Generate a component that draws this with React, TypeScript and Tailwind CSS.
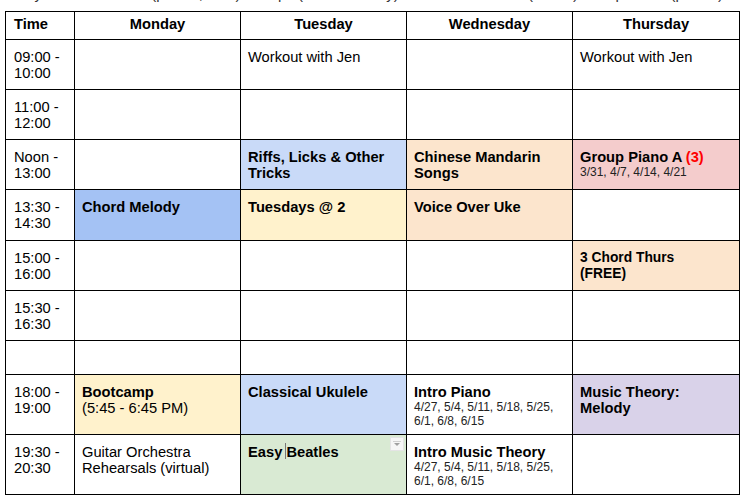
import React from 'react';

type Cell = {
  title?: React.ReactNode;
  text?: React.ReactNode;
  dates?: string[];
  bg?: string;
  small?: boolean;
  extra?: React.ReactNode;
};

const rowHeights = ['h-[50px]', 'h-[50px]', 'h-[50px]', 'h-[51px]', 'h-[50px]', 'h-[50px]', 'h-[34px]', 'h-[60px]', 'h-[60px]'];

const dates = ['4/27, 5/4, 5/11, 5/18, 5/25,', '6/1, 6/8, 6/15'];

const rows: { time: string[]; cells: Cell[] }[] = [
  { time: ['09:00 -', '10:00'], cells: [{}, { text: 'Workout with Jen' }, {}, { text: 'Workout with Jen' }] },
  { time: ['11:00 -', '12:00'], cells: [{}, {}, {}, {}] },
  {
    time: ['Noon -', '13:00'],
    cells: [
      {},
      { title: ['Riffs, Licks & Other', 'Tricks'], bg: 'bg-[#c9daf8]' },
      { title: ['Chinese Mandarin', 'Songs'], bg: 'bg-[#fce5cd]' },
      {
        title: (
          <>
            Group Piano A <span className="text-[#ff0000]">(3)</span>
          </>
        ),
        dates: ['3/31, 4/7, 4/14, 4/21'],
        bg: 'bg-[#f4cccc]',
      },
    ],
  },
  {
    time: ['13:30 -', '14:30'],
    cells: [
      { title: 'Chord Melody', bg: 'bg-[#a4c2f4]' },
      { title: 'Tuesdays @ 2', bg: 'bg-[#fff2cc]' },
      { title: 'Voice Over Uke', bg: 'bg-[#fce5cd]' },
      {},
    ],
  },
  {
    time: ['15:00 -', '16:00'],
    cells: [{}, {}, {}, { title: ['3 Chord Thurs', '(FREE)'], bg: 'bg-[#fce5cd]', small: true }],
  },
  { time: ['15:30 -', '16:30'], cells: [{}, {}, {}, {}] },
  { time: [], cells: [{}, {}, {}, {}] },
  {
    time: ['18:00 -', '19:00'],
    cells: [
      { title: 'Bootcamp', text: '(5:45 - 6:45 PM)', bg: 'bg-[#fff2cc]' },
      { title: 'Classical Ukulele', bg: 'bg-[#c9daf8]' },
      { title: 'Intro Piano', dates },
      { title: ['Music Theory:', 'Melody'], bg: 'bg-[#d9d2e9]' },
    ],
  },
  {
    time: ['19:30 -', '20:30'],
    cells: [
      { text: ['Guitar Orchestra', 'Rehearsals (virtual)'] },
      {
        title: (
          <>
            Easy{' '}
            <span className="relative">
              <span className="absolute left-[-1px] top-[-1px] h-[16px] w-px bg-[#777]" />
            </span>
            Beatles
          </>
        ),
        bg: 'bg-[#d9ead3]',
        extra: (
          <div className="absolute right-[2px] top-[2px] flex h-[14px] w-[14px] items-center justify-center border border-[#e4e4e4] bg-[#f6f6f6]">
            <svg width="8" height="6" viewBox="0 0 8 6">
              <rect x="0" y="0" width="8" height="1" fill="#d0d0d0" />
              <path d="M1 2 L7 2 L4 5 Z" fill="#a0a0a0" />
            </svg>
          </div>
        ),
      },
      { title: 'Intro Music Theory', dates },
      {},
    ],
  },
];

function Lines({ value }: { value: React.ReactNode }) {
  if (Array.isArray(value)) {
    return (
      <>
        {value.map((v, i) => (
          <div key={i}>{v}</div>
        ))}
      </>
    );
  }
  return <div>{value}</div>;
}

function EventCell({ cell, last }: { cell: Cell; last: boolean }) {
  return (
    <div className={`relative border-r border-b border-black px-[7px] pt-[9px] ${cell.bg ?? 'bg-white'} ${last ? 'w-[167px]' : 'w-[166px]'}`}>
      {cell.title && (
        <div className={cell.small ? 'text-[13.8px] leading-[16px] font-bold' : 'font-bold'}>
          <Lines value={cell.title} />
        </div>
      )}
      {cell.text && <Lines value={cell.text} />}
      {cell.dates && (
        <div className="text-[12px] leading-[14px] text-[#222]">
          <Lines value={cell.dates} />
        </div>
      )}
      {cell.extra}
    </div>
  );
}

export default function App() {
  return (
    <div className="h-[502px] w-[744px] overflow-hidden bg-white font-['Liberation_Sans',Arial,sans-serif] text-[14.7px] leading-[16px] text-black">
      {/* clipped line above the sheet */}
      <div className="h-[11px] overflow-hidden">
        <div className="-mt-[14px] whitespace-nowrap pl-[2px] text-[15px] leading-[16px] text-[#333]">
          ekday Online Classes (pacific, time) Groups (Lessons Only) Ukulele Ensemble (Mixed) Group Piano (pacific)
        </div>
      </div>

      <div className="ml-[5px] w-[735px] border-l border-t border-black">
        {/* header */}
        <div className="flex h-[28px] font-bold">
          <div className="w-[69px] border-r border-b border-black px-[8px] pt-[4px]">Time</div>
          {['Monday', 'Tuesday', 'Wednesday', 'Thursday'].map((d, i) => (
            <div
              key={d}
              className={`border-r border-b border-black pt-[4px] text-center ${i === 3 ? 'w-[167px]' : 'w-[166px]'}`}
            >
              {d}
            </div>
          ))}
        </div>

        {rows.map((row, r) => (
          <div key={r} className={`flex ${rowHeights[r]}`}>
            <div className="w-[69px] border-r border-b border-black px-[8px] pt-[9px]">
              {row.time.map((t) => (
                <div key={t}>{t}</div>
              ))}
            </div>
            {row.cells.map((cell, c) => (
              <EventCell key={c} cell={cell} last={c === 3} />
            ))}
          </div>
        ))}
      </div>
    </div>
  );
}
